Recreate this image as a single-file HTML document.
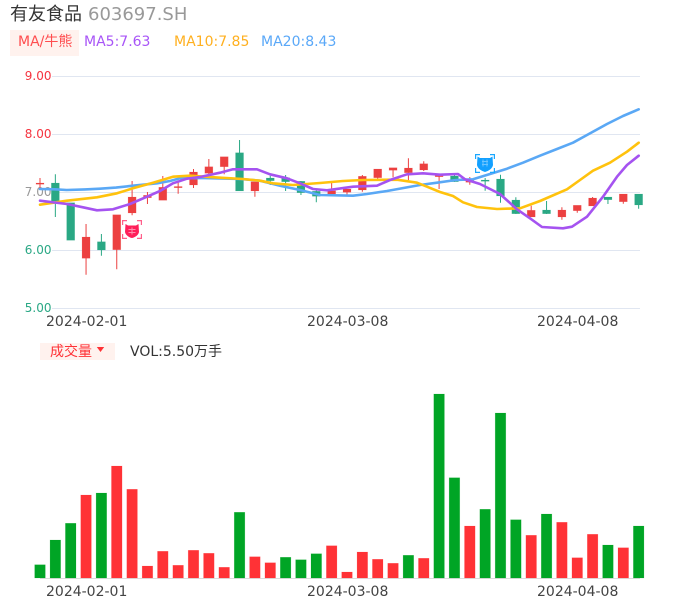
<!DOCTYPE html>
<html><head><meta charset="utf-8"><style>
html,body{margin:0;padding:0;background:#fff;width:686px;height:606px;overflow:hidden}
body{position:relative;font-family:"DejaVu Sans","Noto Sans CJK SC",sans-serif}
svg{position:absolute;left:0;top:0}
.t{position:absolute;white-space:nowrap;line-height:20px;font-size:14px}
</style></head><body>
<div class="t" style="left:10px;top:30px;width:69px;height:26px;background:#fff2ee"></div>
<div class="t" style="left:40px;top:343px;width:75px;height:17px;background:#fff2ee"></div>
<svg width="686" height="606" viewBox="0 0 686 606">
<defs><filter id="s" x="-5%" y="-20%" width="110%" height="140%"><feGaussianBlur stdDeviation=".3"/></filter></defs>
<g stroke="#e0e6f1" stroke-width="1" fill="none">
<path d="M52 76.500H640M52 134.500H640M52 192.500H640M52 250.500H640M52 308.500H640"/>
</g>
<g font-family="DejaVu Sans" font-size="12" text-anchor="end">
<text x="51.500" y="80" fill="#f5333f">9.00</text>
<text x="51.500" y="138" fill="#f5333f">8.00</text>
<text x="51.500" y="196" fill="#999">7.00</text>
<text x="51.500" y="254" fill="#2aa885">6.00</text>
<text x="51.500" y="312" fill="#2aa885">5.00</text>
</g>
<path stroke="#ec4040" stroke-width="1" fill="none" d="M40 178V188M86.050 224V274.700M116.750 249V269.300M132.100 181V215.300M147.450 192V204M162.800 176V200M178.150 182V193.700M193.500 169V188M208.850 159V175M224.200 166V174.300M254.900 191V196.700M331.650 183V194M347 189V195M362.350 175V191.700M377.700 169V179M393.050 168V177.300M408.400 158.300V180M423.750 161.300V171M439.100 174V189M469.800 177V184.700M531.200 205.700V217M561.900 207.300V219.700M577.250 210V212.700M592.600 197V206M623.300 201V203.700"/>
<path stroke="#2aa884" stroke-width="1" fill="none" d="M55.350 174.300V217M101.400 234V255.700M239.550 140V191M270.250 175.700V185M285.600 175V191M300.950 181V195M316.300 190V202.300M454.450 175V182M485.150 178V190.700M500.500 174.700V202.700M515.850 197.300V214M546.550 201V214M607.950 197V204M638.650 194V208.700"/>
<path fill="#ec4040" stroke="#ec4040" stroke-opacity=".25" stroke-width=".6" d="M36 183h8v1.200h-8zM82.050 237h8v21.300h-8zM112.750 214.700h8v35h-8zM128.100 197h8v16h-8zM143.450 195.300h8v2.400h-8zM158.800 187.300h8v13h-8zM174.150 186.500h8v1.200h-8zM189.500 172h8v13h-8zM204.850 166.700h8v6.600h-8zM220.200 156.700h8v10h-8zM250.900 181.700h8v9.300h-8zM327.650 190.700h8v3.300h-8zM343 189h8v3.300h-8zM358.350 176.300h8v13.700h-8zM373.700 169h8v8.700h-8zM389.050 167.700h8v2.600h-8zM404.400 168h8v4.700h-8zM419.750 163.700h8v6.300h-8zM435.100 174.300h8v2.400h-8zM465.800 179.300h8v3h-8zM527.200 210.300h8v6.700h-8zM557.900 210h8v7h-8zM573.250 205.300h8v5.400h-8zM588.600 198h8v8h-8zM619.300 194h8v7.700h-8z"/>
<path fill="#2aa884" stroke="#2aa884" stroke-opacity=".25" stroke-width=".6" d="M51.350 183h8v18h-8zM66.700 202.700h8v37.600h-8zM97.400 241.700h8v8.300h-8zM235.550 152.700h8v38.300h-8zM266.250 178h8v2.700h-8zM281.600 177.700h8v4h-8zM296.950 181.300h8v11.400h-8zM312.300 191.300h8v5h-8zM450.450 176h8v5.700h-8zM481.150 180h8v1.300h-8zM496.500 179h8v17h-8zM511.850 200h8v13.700h-8zM542.550 210h8v3.700h-8zM603.950 197h8v2.700h-8zM634.650 194h8v11h-8z"/>
<g fill="none" stroke-width="2.600" stroke-linejoin="round" stroke-linecap="round" filter="url(#s)">
<path stroke="#5aa8f5" d="M40 189L55 189.300 66.700 190 85 189.400 100 188.700 116 187.600 133 185.700 157 183.300 170 181 180 178.300 200 178 230 178.700 240 179 260 180.700 280 185.700 300 190 320 195 353 195.700 367 194 387 191 420 185 437 182.700 456 180 473 179.300 490 174 507 168.700 523 162.700 540 155.700 557 149 573 142.700 587 135 607 124 623 116 638.700 109.300"/>
<path stroke="#ffc20e" d="M40 204.700L67 200.700 97 197.300 117 193.300 133 188.300 153 182.700 173 176.700 190 175.700 220 177.700 243 179 260 180.700 273 183.300 293 185 320 183 343 181 363 180 397 179.700 417 182.700 427 186.700 440 192 453 196 463 202.300 477 207 497 209 520 208.300 540 201 567 189.300 580 180 593 170.700 610 162.700 627 151.700 638.700 142.700"/>
<path stroke="#a552f0" d="M40 200.700L67 204 83 207.300 97 210.300 113 209.300 130 204 147 196.700 160 191 173 183.300 187 178.700 200 177 220 172.700 233 169.300 257 169.300 270 174.300 287 178.300 300 183.300 313 189 327 190.300 353 186.700 377 185.700 390 180 407 174.300 423 173.300 440 174.700 458 174 465 179.300 480 184 500 194 517 209.300 530 218.300 542 227 563 228.300 572 226.700 587 216.700 603 196.700 617 176.700 627 165 638.700 155.700"/>
</g>
<g fill="none" stroke="#ff5f8a" stroke-width="1.200">
<path d="M122.600 225v-4.400h4.400M137 220.600h4.400v4.400M141.400 234v4.400h-4.400M127 238.400h-4.400v-4.400"/>
</g>
<path fill="#ff1f5a" d="M125.500 224l2.500 1.500h8l2.500-1.500.5 8c-.5 3-4 5.500-7 6-3-.5-6.500-3-7-6z"/>
<path stroke="#ff8fae" stroke-width="1" fill="none" d="M128.500 229.500h7M128.500 232.500h7M132 227.500v7"/>
<g fill="none" stroke="#1aa7ff" stroke-width="1.200">
<path d="M475.600 159v-4.400h4.400M490 154.600h4.400v4.400M494.400 168v4.400h-4.400M480 172.400h-4.400v-4.400"/>
</g>
<path fill="#12a0ff" d="M477.500 156.500l2.500 1.500h10l2.500-1.500.5 8.500c-.5 3.500-4.500 6-8 7-3.500-1-7.500-3.500-8-7z"/>
<path stroke="#6cc4ff" stroke-width="1" fill="none" d="M482 161.500h6M482 164.500h6M483 159.500v7M487 159.500v7"/>
<path stroke="#dcdcdc" stroke-width="1" d="M40 578.500H640"/>
<path fill="#ff3236" stroke="#ff3236" stroke-opacity=".25" stroke-width=".6" d="M80.750 495h10.600v83h-10.600zM111.450 466h10.600v112h-10.600zM126.800 489.300h10.600v88.700h-10.600zM142.150 566h10.600v12h-10.600zM157.500 551.300h10.600v26.700h-10.600zM172.850 565.300h10.600v12.700h-10.600zM188.200 550.300h10.600v27.700h-10.600zM203.550 553.300h10.600v24.700h-10.600zM218.900 567.300h10.600v10.700h-10.600zM249.600 556.700h10.600v21.300h-10.600zM264.950 562.700h10.600v15.300h-10.600zM326.350 545.700h10.600v32.300h-10.600zM341.700 572h10.600v6h-10.600zM357.050 552h10.600v26h-10.600zM372.400 559.300h10.600v18.700h-10.600zM387.750 563.300h10.600v14.700h-10.600zM418.450 558.300h10.600v19.700h-10.600zM464.500 526h10.600v52h-10.600zM525.900 535.300h10.600v42.700h-10.600zM556.600 522.300h10.600v55.700h-10.600zM571.950 557.700h10.600v20.300h-10.600zM587.300 534.300h10.600v43.700h-10.600zM618 547.700h10.600v30.300h-10.600z"/>
<path fill="#00a525" stroke="#00a525" stroke-opacity=".25" stroke-width=".6" d="M34.700 564.700h10.600v13.300h-10.600zM50.050 540h10.600v38h-10.600zM65.400 523.300h10.600v54.700h-10.600zM96.100 493h10.600v85h-10.600zM234.250 512.300h10.600v65.700h-10.600zM280.300 557.300h10.600v20.700h-10.600zM295.650 559.700h10.600v18.300h-10.600zM311 553.700h10.600v24.300h-10.600zM403.100 555.300h10.600v22.700h-10.600zM433.800 394h10.600v184h-10.600zM449.150 477.700h10.600v100.300h-10.600zM479.850 509.300h10.600v68.700h-10.600zM495.200 413h10.600v165h-10.600zM510.550 519.700h10.600v58.300h-10.600zM541.250 514h10.600v64h-10.600zM602.650 545h10.600v33h-10.600zM633.350 526h10.600v52h-10.600z"/>
<path fill="#ff3236" d="M96.800 347h7.400l-3.700 5z"/>
</svg>
<div class="t" style="left:10px;top:5px;font-size:18px;color:#333">有友食品</div>
<div class="t" style="left:88px;top:5px;font-size:18px;color:#999">603697.SH</div>
<div class="t" style="left:18px;top:32px;color:#ff4d4f">MA/牛熊</div>
<div class="t" style="left:84px;top:32px;color:#a855f7">MA5:7.63</div>
<div class="t" style="left:174px;top:32px;color:#ffb020">MA10:7.85</div>
<div class="t" style="left:261px;top:32px;color:#5aa8f8">MA20:8.43</div>
<div class="t" style="left:46px;top:312px;color:#444">2024-02-01</div>
<div class="t" style="left:307px;top:312px;color:#444">2024-03-08</div>
<div class="t" style="left:537px;top:312px;color:#444">2024-04-08</div>
<div class="t" style="left:50px;top:342px;color:#ff3236">成交量</div>
<div class="t" style="left:130px;top:342px;color:#333">VOL:5.50万手</div>
<div class="t" style="left:46px;top:582px;color:#444">2024-02-01</div>
<div class="t" style="left:307px;top:582px;color:#444">2024-03-08</div>
<div class="t" style="left:537px;top:582px;color:#444">2024-04-08</div>
</body></html>
